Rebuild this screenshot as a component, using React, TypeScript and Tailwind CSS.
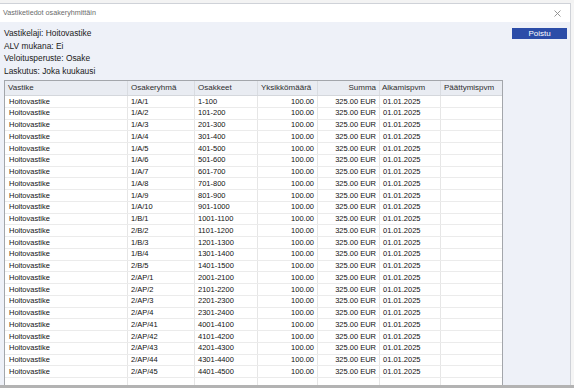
import React from "react";

type Row = {
  group: string;
  shares: string;
};

const rows: Row[] = [
  { group: "1/A/1", shares: "1-100" },
  { group: "1/A/2", shares: "101-200" },
  { group: "1/A/3", shares: "201-300" },
  { group: "1/A/4", shares: "301-400" },
  { group: "1/A/5", shares: "401-500" },
  { group: "1/A/6", shares: "501-600" },
  { group: "1/A/7", shares: "601-700" },
  { group: "1/A/8", shares: "701-800" },
  { group: "1/A/9", shares: "801-900" },
  { group: "1/A/10", shares: "901-1000" },
  { group: "1/B/1", shares: "1001-1100" },
  { group: "2/B/2", shares: "1101-1200" },
  { group: "1/B/3", shares: "1201-1300" },
  { group: "1/B/4", shares: "1301-1400" },
  { group: "2/B/5", shares: "1401-1500" },
  { group: "2/AP/1", shares: "2001-2100" },
  { group: "2/AP/2", shares: "2101-2200" },
  { group: "2/AP/3", shares: "2201-2300" },
  { group: "2/AP/4", shares: "2301-2400" },
  { group: "2/AP/41", shares: "4001-4100" },
  { group: "2/AP/42", shares: "4101-4200" },
  { group: "2/AP/43", shares: "4201-4300" },
  { group: "2/AP/44", shares: "4301-4400" },
  { group: "2/AP/45", shares: "4401-4500" },
];

const cols = "grid grid-cols-[123px_67px_63px_60px_62px_61px_61px]";

export default function App() {
  return (
    <div
      className="w-[574px] h-[388px] flex flex-col bg-[#f3f3f3] overflow-hidden"
      style={{ fontFamily: '"Liberation Sans", Arial, sans-serif' }}
    >
      {/* strip above the dialog */}
      <div className="h-[3px] shrink-0 bg-[#f3f3f3]" />

      <div className="flex flex-1 min-h-0">
        {/* dialog */}
        <div className="w-[571px] flex flex-col border-t border-r border-[#cfd2d8]">
          {/* title bar */}
          <div className="h-[18px] shrink-0 bg-white flex items-center justify-between pl-[3px] pr-[9px]">
            <span className="text-[7.2px] text-[#6b6b6b]">Vastiketiedot osakeryhmittäin</span>
            <svg width="7" height="7" viewBox="0 0 7 7" className="mt-[1px]">
              <path d="M0.5 0.5 L6.5 6.5 M6.5 0.5 L0.5 6.5" stroke="#8a8a8a" strokeWidth="0.9" />
            </svg>
          </div>

          {/* body */}
          <div className="flex-1 min-h-0 flex bg-[#eef1f8]">
            <div className="w-[499px] ml-[4px] flex flex-col">
              <div className="pt-[5px] text-[8.4px] leading-[12.5px] text-[#1a1a1a]">
                <div>Vastikelaji: Hoitovastike</div>
                <div>ALV mukana: Ei</div>
                <div>Veloitusperuste: Osake</div>
                <div>Laskutus: Joka kuukausi</div>
              </div>

              {/* table */}
              <div className="mt-[3px] flex-1 min-h-0 flex flex-col bg-white border-l border-r border-t border-[#a3a6ab]">
                <div className={`${cols} h-[15px] shrink-0 bg-[#e9ecf2] border-b border-[#d4d7dc] text-[8px] text-[#2e2e2e]`}>
                  <div className="pl-[3px] flex items-center border-r border-[#d9dce1]">Vastike</div>
                  <div className="pl-[3px] flex items-center border-r border-[#d9dce1]">Osakeryhmä</div>
                  <div className="pl-[3px] flex items-center border-r border-[#d9dce1]">Osakkeet</div>
                  <div className="pl-[3px] flex items-center border-r border-[#d9dce1] whitespace-nowrap overflow-hidden">Yksikkömäärä</div>
                  <div className="pr-[3px] flex items-center justify-end border-r border-[#d9dce1]">Summa</div>
                  <div className="pl-[2px] flex items-center border-r border-[#d9dce1]">Alkamispvm</div>
                  <div className="pl-[3px] flex items-center">Päättymispvm</div>
                </div>

                {rows.map((r) => (
                  <div
                    key={r.group}
                    className={`${cols} h-[11.75px] shrink-0 border-b border-[#ebebeb] text-[7.5px] text-[#111] leading-none`}
                  >
                    <div className="pl-[4px] flex items-center border-r border-[#e6e6e6]">Hoitovastike</div>
                    <div className="pl-[3px] flex items-center border-r border-[#e6e6e6]">{r.group}</div>
                    <div className="pl-[3px] flex items-center border-r border-[#e6e6e6]">{r.shares}</div>
                    <div className="pr-[3px] flex items-center justify-end border-r border-[#e6e6e6]">100.00</div>
                    <div className="pr-[3px] flex items-center justify-end border-r border-[#e6e6e6]">325.00 EUR</div>
                    <div className="pl-[3px] flex items-center border-r border-[#e6e6e6]">01.01.2025</div>
                    <div />
                  </div>
                ))}

                {/* empty filler keeps the column lines */}
                <div className={`${cols} flex-1`}>
                  <div className="border-r border-[#e6e6e6]" />
                  <div className="border-r border-[#e6e6e6]" />
                  <div className="border-r border-[#e6e6e6]" />
                  <div className="border-r border-[#e6e6e6]" />
                  <div className="border-r border-[#e6e6e6]" />
                  <div className="border-r border-[#e6e6e6]" />
                  <div />
                </div>
              </div>
            </div>

            <div className="ml-[9px] mt-[6px]">
              <button className="block w-[55px] h-[11px] bg-[#2c4da8] text-white text-[8px] leading-[11px] text-center">
                Poistu
              </button>
            </div>
          </div>
        </div>
        <div className="flex-1 bg-[#f5f5f5]" />
      </div>

      {/* bottom bar */}
      <div className="h-[3px] shrink-0 bg-[#b3b3b3]" />
    </div>
  );
}
